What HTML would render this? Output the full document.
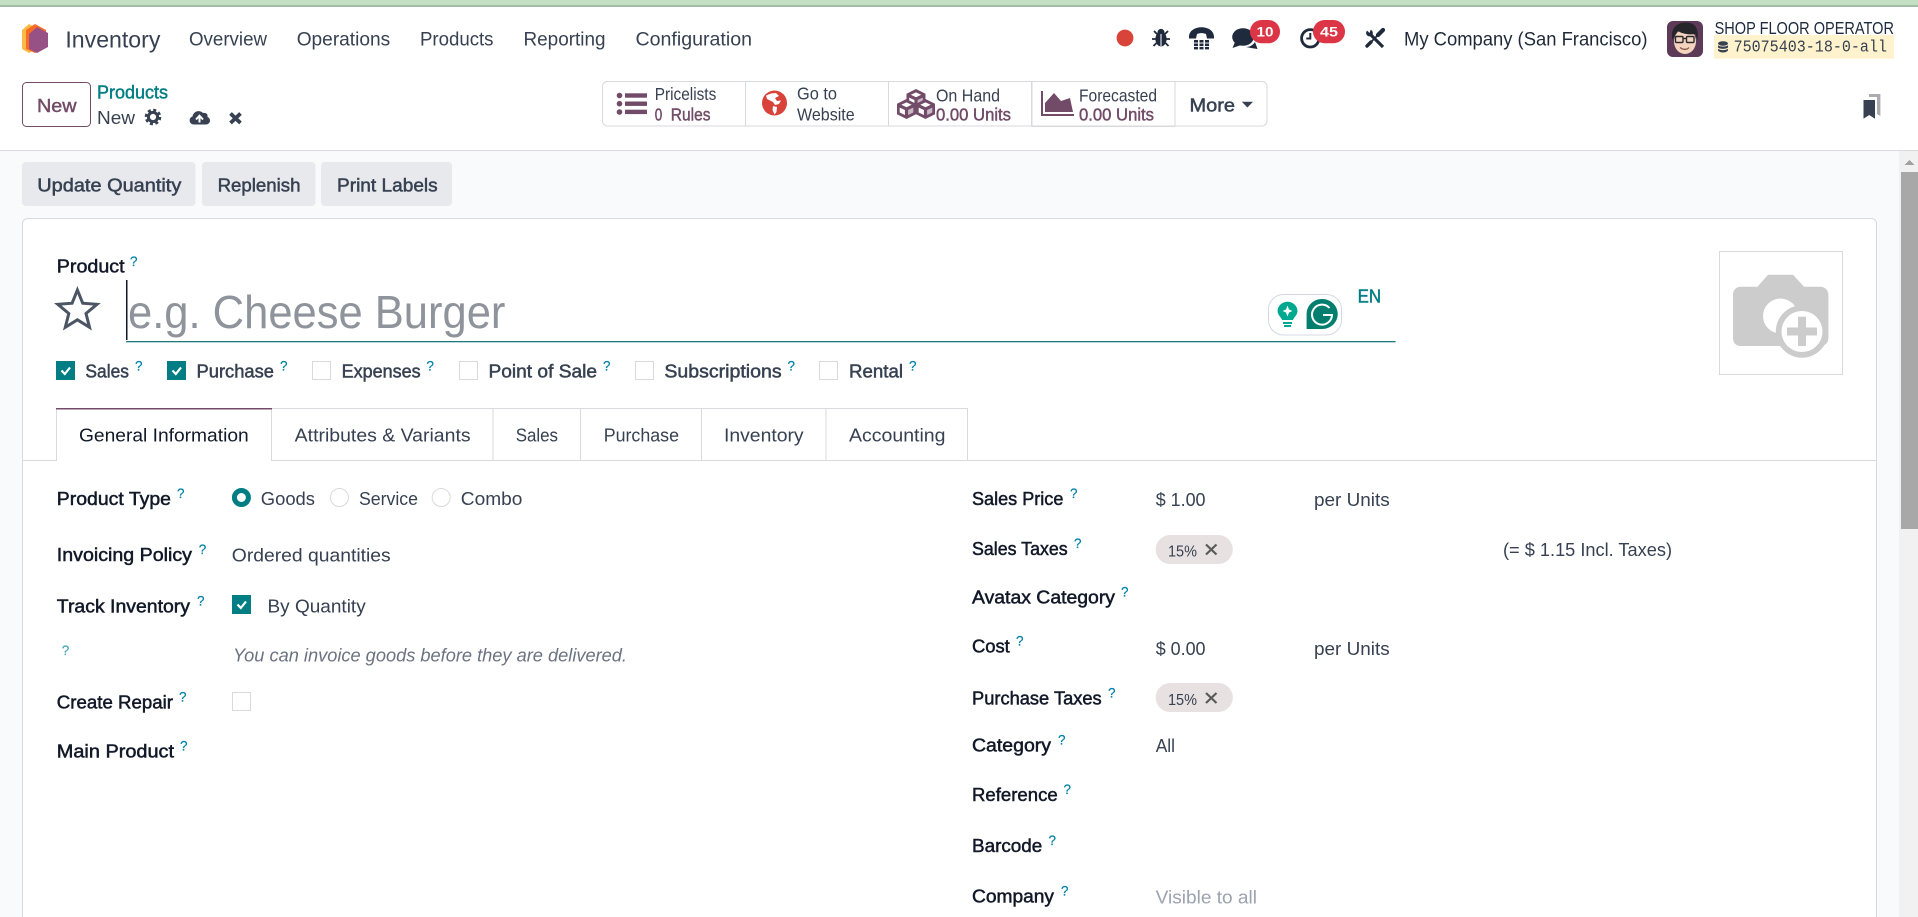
<!DOCTYPE html>
<html lang="en">
<head>
<meta charset="utf-8">
<title>Inventory - Products New</title>
<style>
html,body{margin:0;padding:0;width:1918px;height:917px;overflow:hidden;background:#f9fafb}
svg{display:block;position:absolute;left:0;top:0}
text{font-family:"Liberation Sans",sans-serif;font-size:18.8px;fill:#374151;white-space:pre}
.nav{fill:#374151;font-size:19.2px}
.dk{fill:#1f2937}
.lb{fill:#111827;stroke:#111827;stroke-width:.5px}
.sb{fill:#374151;stroke:#374151;stroke-width:.5px}
.pu{fill:#714b67;stroke:#714b67;stroke-width:.45px}
.te{fill:#017e84;stroke:#017e84;stroke-width:.45px}
.q{fill:#0180a5;font-size:13.5px;stroke:#0180a5;stroke-width:.2px}
.st{font-size:17.8px}
.ph{fill:#8f939b;font-size:46px}
.it{font-style:italic;fill:#6b7280}
.bd{fill:#fff;font-size:14px;font-weight:bold;font-family:"Liberation Sans",sans-serif}
.mu{fill:#9ca3af}
.mono{font-family:"Liberation Mono",monospace;font-size:17px;fill:#374151}
</style>
</head>
<body>
<svg width="1918" height="917" viewBox="0 0 1918 917" xmlns="http://www.w3.org/2000/svg">
<defs>
<g id="cube"><path d="M0-10 9.500-5.200V5.200L0 10-9.500 5.200V-5.200Z" fill="#714b67"/><path d="M0-6.600 5.200-4.200 0-1.800-5.200-4.200Z" fill="#fff"/><path d="M-6.800-1.400-1.600 1V6L-6.800 3.500Z" fill="#fff"/><path d="M6.800-1.400 1.600 1V6L6.800 3.500Z" fill="#c9b9c4"/></g>
</defs>
<!-- backgrounds -->
<rect width="1918" height="917" fill="#f9fafb"/>
<rect y="0" width="1918" height="5" fill="#c3dfc4"/>
<rect y="5" width="1918" height="2" fill="#a3bca4"/>
<rect y="7" width="1918" height="143" fill="#fff"/>
<rect y="150" width="1918" height="1" fill="#d8dadd"/>

<!-- logo -->
<path d="M29 24 40 30V47L29 53 22 49V30Z" fill="#fbb945"/>
<path d="M35 24 46 30V47L35 53 26 49V30Z" fill="#fc6b24"/>
<path d="M37 27 48 33V47L37 53 29 49V34Z" fill="#985184"/>

<!-- nav -->
<text x="65.400" y="47.500" textLength="95" lengthAdjust="spacingAndGlyphs" class="nav" style="font-size:23px">Inventory</text>
<text x="189" y="45.500" textLength="78" lengthAdjust="spacingAndGlyphs" class="nav">Overview</text>
<text x="296.700" y="45.500" textLength="93.500" lengthAdjust="spacingAndGlyphs" class="nav">Operations</text>
<text x="420" y="45.500" textLength="73.500" lengthAdjust="spacingAndGlyphs" class="nav">Products</text>
<text x="523.500" y="45.500" textLength="82" lengthAdjust="spacingAndGlyphs" class="nav">Reporting</text>
<text x="635.500" y="45.500" textLength="116.500" lengthAdjust="spacingAndGlyphs" class="nav">Configuration</text>

<!-- systray -->
<circle cx="1125" cy="38" r="8.400" fill="#d9443a"/>
<g fill="#1f2a3c">
<circle cx="1161" cy="32.500" r="3.600"/>
<ellipse cx="1161" cy="39" rx="5.600" ry="7.400"/>
<path d="M1154 31l3 3M1168 31l-3 3M1152 39h5M1170 39h-5M1153.500 46l3-3M1168.500 46l-3-3" stroke="#1f2a3c" stroke-width="1.800" fill="none"/>
<rect x="1160.500" y="34" width="1" height="12" fill="#fff"/>
</g>
<g fill="#1f2a3c">
<path d="M1189 37C1189 24 1214 24 1214 37L1214 38.500H1207L1206 34C1203 32.800 1200 32.800 1197 34L1196 38.500H1189Z"/>
<rect x="1194" y="40" width="4" height="2.600"/><rect x="1199.500" y="40" width="4" height="2.600"/><rect x="1205" y="40" width="4" height="2.600"/>
<rect x="1194" y="43.500" width="4" height="2.600"/><rect x="1199.500" y="43.500" width="4" height="2.600"/><rect x="1205" y="43.500" width="4" height="2.600"/>
<rect x="1194" y="47" width="4" height="2.400"/><rect x="1199.500" y="47" width="4" height="2.400"/><rect x="1205" y="47" width="4" height="2.400"/>
</g>
<ellipse cx="1243" cy="37" rx="10.800" ry="8.800" fill="#1f2a3c"/>
<path d="M1235 42 1232.500 48 1241 45Z" fill="#1f2a3c"/>
<path d="M1246 47C1250 47 1253 45 1255 42L1257.500 49 1251 48Z" fill="#1f2a3c"/>
<rect x="1250" y="20" width="30" height="23.300" rx="11.600" fill="#dc3545"/>
<text x="1256.500" y="36.500" textLength="17" lengthAdjust="spacingAndGlyphs" class="bd">10</text>
<circle cx="1310.300" cy="38.300" r="8.700" fill="none" stroke="#1f2a3c" stroke-width="2.800"/>
<path d="M1310.300 33v5.500h-4" fill="none" stroke="#1f2a3c" stroke-width="2"/>
<rect x="1313" y="20" width="32" height="23.300" rx="11.600" fill="#dc3545"/>
<text x="1320" y="36.500" textLength="18" lengthAdjust="spacingAndGlyphs" class="bd">45</text>
<g fill="none" stroke="#1f2a3c">
<path d="M1371 35 1383 47" stroke-width="3.200"/>
<circle cx="1369.500" cy="33" r="3.400" fill="#1f2a3c" stroke="none"/>
<path d="M1365.500 29 1369.500 33 1371 29Z" fill="#fff" stroke="none"/>
<path d="M1381 32 1368 45" stroke-width="1.800"/>
<path d="M1378 35 1383 30" stroke-width="4.200" stroke-linecap="round"/>
<path d="M1367 46 1371 42" stroke-width="3.400" stroke-linecap="round"/>
</g>
<text x="1404" y="45.500" textLength="243.500" lengthAdjust="spacingAndGlyphs" class="dk" style="font-size:19.200px">My Company (San Francisco)</text>

<!-- avatar -->
<rect x="1667" y="21" width="36" height="36" rx="6" fill="#5c3a58"/>
<ellipse cx="1685" cy="41.500" rx="11" ry="12.500" fill="#f4d4bf"/>
<path d="M1672.500 40C1670 28 1677 22.500 1686 22.500 1695 22.500 1699 28 1697.500 40L1695.500 34C1690 35 1682 34 1678 31 1676 33 1675 36 1672.500 40Z" fill="#26252a"/>
<g fill="none" stroke="#2b2a2e" stroke-width="1.400">
<rect x="1675.500" y="36.500" width="7.500" height="6" rx="1"/>
<rect x="1686.500" y="36.500" width="7.500" height="6" rx="1"/>
<path d="M1683 38.500h3.500"/>
<path d="M1680 47.500c3 2.500 7 2.500 9 0" stroke="#8a5a4a"/>
</g>

<!-- user -->
<rect x="1714" y="35" width="180" height="23.700" fill="#fff3cd"/>
<text x="1714.600" y="34" textLength="179.400" lengthAdjust="spacingAndGlyphs" class="dk" style="font-size:17.200px;fill:#1f2a3c">SHOP FLOOR OPERATOR</text>
<g fill="#374151">
<ellipse cx="1723" cy="43.500" rx="5" ry="2.300"/>
<path d="M1718 45.200c2 1.800 8 1.800 10 0v2.300c-2 1.800-8 1.800-10 0Z"/>
<path d="M1718 48.800c2 1.800 8 1.800 10 0v1.700c-2 2.700-8 2.700-10 0Z"/>
</g>
<text x="1733.600" y="51.700" textLength="153.400" lengthAdjust="spacingAndGlyphs" class="mono">75075403-18-0-all</text>

<!-- control panel left -->
<rect x="22.500" y="82.500" width="68" height="44" rx="4" fill="#fff" stroke="#714b67"/>
<text x="37" y="112" textLength="39.600" lengthAdjust="spacingAndGlyphs" class="pu">New</text>
<text x="97" y="98.500" textLength="71" lengthAdjust="spacingAndGlyphs" class="te">Products</text>
<text x="97" y="124" textLength="38" lengthAdjust="spacingAndGlyphs">New</text>
<circle cx="153" cy="117" r="4.600" fill="none" stroke="#374151" stroke-width="3"/>
<circle cx="153" cy="117" r="7" fill="none" stroke="#374151" stroke-width="2.600" stroke-dasharray="3 2.500"/>
<path d="M194 124.500C189 124.500 188 118 192.500 116.500 193 112 199 109 203 113 207 112.500 208 115 207.500 117 211.500 118.500 210.500 124.500 206 124.500Z" fill="#374151"/>
<path d="M199.500 122.500V116.500M196 119.500l3.500-3.800 3.500 3.800" fill="none" stroke="#fff" stroke-width="2"/>
<path d="M230.500 113.500 240.500 123M240.500 113.500 230.500 123" stroke="#374151" stroke-width="3.800" fill="none"/>

<!-- stat buttons -->
<rect x="602.500" y="81.500" width="664.500" height="44.500" rx="5" fill="#fff" stroke="#d8dadd"/>
<path d="M745.500 82V126M888.500 82V126M1031.500 82V126M1175 81.500V126.500" stroke="#d8dadd" fill="none"/>
<path d="M1175 81.500H1032V126.500H1175" stroke="#d8dadd" fill="none"/>
<g fill="#714b67">
<circle cx="619.500" cy="95.500" r="2.800"/><circle cx="619.500" cy="103.700" r="2.800"/><circle cx="619.500" cy="112" r="2.800"/>
<rect x="625" y="93.300" width="22" height="4.400"/><rect x="625" y="101.500" width="22" height="4.400"/><rect x="625" y="109.700" width="22" height="4.400"/>
</g>
<text x="654.700" y="100" textLength="61.600" lengthAdjust="spacingAndGlyphs" class="st">Pricelists</text>
<text x="654.700" y="120.700" textLength="7.500" lengthAdjust="spacingAndGlyphs" class="pu st">0</text>
<text x="670.800" y="120.700" textLength="39.700" lengthAdjust="spacingAndGlyphs" class="pu st">Rules</text>

<circle cx="774.500" cy="103" r="12.500" fill="#d8423a"/>
<path d="M766 95.500 771 93.500 776 93 779 96 775 98 777 101 781 100.500 779 104 775 105 773 102 769 100 767 99Z" fill="#fff"/>
<path d="M773 106 777 107 776.500 112 774.500 114.500 772.500 110Z" fill="#fff"/>
<text x="797" y="99.300" textLength="40" lengthAdjust="spacingAndGlyphs" class="st">Go to</text>
<text x="797" y="120.700" textLength="57.700" lengthAdjust="spacingAndGlyphs" class="st">Website</text>

<use href="#cube" x="916" y="99"/>
<use href="#cube" x="906.500" y="109"/>
<use href="#cube" x="925.500" y="109"/>
<text x="936" y="101.700" textLength="64" lengthAdjust="spacingAndGlyphs" class="st">On Hand</text>
<text x="936" y="120.700" textLength="75" lengthAdjust="spacingAndGlyphs" class="pu st">0.00 Units</text>

<path d="M1041 91h2V114H1074V116H1041Z" fill="#714b67"/>
<path d="M1045 112V103L1054 93 1061 101 1070 98 1073 112Z" fill="#714b67"/>
<text x="1079" y="101.700" textLength="78" lengthAdjust="spacingAndGlyphs" class="st">Forecasted</text>
<text x="1079" y="120.700" textLength="75" lengthAdjust="spacingAndGlyphs" class="pu st">0.00 Units</text>

<text x="1189.500" y="111.700" textLength="45.500" lengthAdjust="spacingAndGlyphs" class="sb">More</text>
<path d="M1241.800 101.700H1253L1247.400 107.500Z" fill="#374151"/>

<!-- bookmarks -->
<path d="M1869 94H1880.400V116L1877 114V97H1869Z" fill="#aaacb0"/>
<path d="M1863.500 100H1875V118.700L1869.200 115 1863.500 118.700Z" fill="#374151"/>

<!-- action buttons -->
<rect x="22" y="162" width="173.500" height="44" rx="4" fill="#e7e9ed"/>
<rect x="202" y="162" width="113.500" height="44" rx="4" fill="#e7e9ed"/>
<rect x="321" y="162" width="131" height="44" rx="4" fill="#e7e9ed"/>
<text x="37.300" y="191.500" textLength="144" lengthAdjust="spacingAndGlyphs" class="sb">Update Quantity</text>
<text x="217.600" y="191.500" textLength="82.900" lengthAdjust="spacingAndGlyphs" class="sb">Replenish</text>
<text x="337" y="191.500" textLength="100.700" lengthAdjust="spacingAndGlyphs" class="sb">Print Labels</text>

<!-- card: open at the bottom, it continues below the visible frame -->
<path d="M22.500 917V223.500A5 5 0 0 1 27.500 218.500H1871.500A5 5 0 0 1 1876.500 223.500V917" fill="#fff" stroke="#d8dadd"/>

<!-- title -->
<text x="56.800" y="272.700" textLength="67.800" lengthAdjust="spacingAndGlyphs" class="lb">Product</text>
<text x="130" y="266" class="q">?</text>
<path d="M77.400 290 82.700 303.200 97 304.300 86 313.500 89.500 327.300 77.400 319.800 65.300 327.300 68.800 313.500 57.800 304.300 72.100 303.200Z" fill="none" stroke="#4b5563" stroke-width="3"/>
<rect x="126" y="341" width="1269.600" height="1.300" fill="#1f7a7c"/>
<text x="128" y="328" textLength="377.400" lengthAdjust="spacingAndGlyphs" class="ph">e.g. Cheese Burger</text>
<rect x="126" y="280" width="1.500" height="60" fill="#111827"/>

<!-- grammarly -->
<rect x="1268.500" y="294.500" width="73" height="40.500" rx="15" fill="#fff" stroke="#d5d8e4"/>
<path d="M1287.500 301.700C1293 301.700 1297.500 306 1297.500 311 1297.500 315 1294 317 1293 320H1282C1281 317 1277.600 315 1277.600 311 1277.600 306 1282 301.700 1287.500 301.700Z" fill="#00a88f"/>
<path d="M1287.500 305.500 1289 309.500 1292.500 311 1289 312.500 1287.500 316.500 1286 312.500 1282.500 311 1286 309.500Z" fill="#fff"/>
<rect x="1283" y="322" width="9" height="2" fill="#00a88f"/>
<rect x="1284" y="325" width="7" height="2" fill="#00a88f"/>
<path d="M1306.600 329V314C1306.600 305.500 1313.500 299 1322 299 1330.600 299 1337.700 305.500 1337.700 314 1337.700 322.500 1330.600 329 1322 329Z" fill="#027e6f"/>
<path d="M1329.500 308A10 10 0 1 0 1332 315H1323" fill="none" stroke="#fff" stroke-width="2"/>
<text x="1357.600" y="302.700" textLength="23.400" lengthAdjust="spacingAndGlyphs" class="te">EN</text>

<!-- image placeholder -->
<rect x="1719.500" y="251.500" width="123" height="123" fill="#fff" stroke="#d8dadd"/>
<path d="M1741 286.700H1757.500L1768 274.700H1793L1804 286.700H1820C1825 286.700 1828.400 290 1828.400 295V338C1828.400 343 1825 346 1820 346H1741C1736 346 1733 343 1733 338V295C1733 290 1736 286.700 1741 286.700Z" fill="#ccc"/>
<circle cx="1780.500" cy="316" r="17.500" fill="#fff"/>
<circle cx="1802" cy="331.500" r="26.200" fill="#ccc"/>
<circle cx="1802" cy="331.500" r="20.500" fill="#fff"/>
<rect x="1787" y="327.500" width="30" height="8" fill="#ccc"/>
<rect x="1798" y="316.700" width="8" height="29.300" fill="#ccc"/>

<!-- check row -->
<rect x="56" y="361" width="19" height="19" fill="#017e84"/>
<path d="M61.500 370.500 64.800 374 70 367.500" fill="none" stroke="#fff" stroke-width="2.200"/>
<text x="85.400" y="377.300" textLength="43.600" lengthAdjust="spacingAndGlyphs" class="sb">Sales</text>
<text x="135" y="370.300" class="q">?</text>
<rect x="167" y="361" width="19" height="19" fill="#017e84"/>
<path d="M172.500 370.500 175.800 374 181 367.500" fill="none" stroke="#fff" stroke-width="2.200"/>
<text x="196.500" y="377.300" textLength="77.500" lengthAdjust="spacingAndGlyphs" class="sb">Purchase</text>
<text x="280" y="370.300" class="q">?</text>
<rect x="312.500" y="361.500" width="18" height="18" fill="#fff" stroke="#d8dadd"/>
<text x="341.600" y="377.300" textLength="79" lengthAdjust="spacingAndGlyphs" class="sb">Expenses</text>
<text x="426.400" y="370.300" class="q">?</text>
<rect x="459.500" y="361.500" width="18" height="18" fill="#fff" stroke="#d8dadd"/>
<text x="488.500" y="377.300" textLength="108.500" lengthAdjust="spacingAndGlyphs" class="sb">Point of Sale</text>
<text x="603" y="370.300" class="q">?</text>
<rect x="635.500" y="361.500" width="18" height="18" fill="#fff" stroke="#d8dadd"/>
<text x="664.400" y="377.300" textLength="117.200" lengthAdjust="spacingAndGlyphs" class="sb">Subscriptions</text>
<text x="787.500" y="370.300" class="q">?</text>
<rect x="819.500" y="361.500" width="18" height="18" fill="#fff" stroke="#d8dadd"/>
<text x="849" y="377.300" textLength="54" lengthAdjust="spacingAndGlyphs" class="sb">Rental</text>
<text x="909" y="370.300" class="q">?</text>

<!-- tabs -->
<path d="M23 460.500H56.500V408.500H271.500V460.500H1876" fill="none" stroke="#d8dadd"/>
<path d="M271.500 408.500H967.500V460.500M493 408.500V460.500M580.500 408.500V460.500M701.500 408.500V460.500M826 408.500V460.500" fill="none" stroke="#d8dadd"/>
<rect x="56" y="408" width="216" height="1.500" fill="#714b67"/>
<rect x="57" y="459" width="214" height="3" fill="#fff"/>
<text x="79" y="441.700" textLength="169.700" lengthAdjust="spacingAndGlyphs" class="dk" style="fill:#111827">General Information</text>
<text x="294.700" y="441.700" textLength="175.900" lengthAdjust="spacingAndGlyphs">Attributes &amp; Variants</text>
<text x="515.700" y="441.700" textLength="42.300" lengthAdjust="spacingAndGlyphs">Sales</text>
<text x="603.700" y="441.700" textLength="75.300" lengthAdjust="spacingAndGlyphs">Purchase</text>
<text x="724" y="441.700" textLength="79.600" lengthAdjust="spacingAndGlyphs">Inventory</text>
<text x="849" y="441.700" textLength="96.500" lengthAdjust="spacingAndGlyphs">Accounting</text>

<!-- left column -->
<text x="56.800" y="505" textLength="114.200" lengthAdjust="spacingAndGlyphs" class="lb">Product Type</text>
<text x="177" y="498" class="q">?</text>
<circle cx="241.400" cy="497.500" r="7" fill="#fff" stroke="#017e84" stroke-width="5"/>
<text x="260.800" y="505" textLength="54.200" lengthAdjust="spacingAndGlyphs">Goods</text>
<circle cx="339.400" cy="497.500" r="9" fill="#fff" stroke="#d8dadd"/>
<text x="359" y="505" textLength="59" lengthAdjust="spacingAndGlyphs">Service</text>
<circle cx="441.200" cy="497.500" r="9" fill="#fff" stroke="#d8dadd"/>
<text x="460.800" y="505" textLength="61.600" lengthAdjust="spacingAndGlyphs">Combo</text>

<text x="56.800" y="561" textLength="135.200" lengthAdjust="spacingAndGlyphs" class="lb">Invoicing Policy</text>
<text x="198.800" y="554" class="q">?</text>
<text x="231.800" y="561.700" textLength="158.900" lengthAdjust="spacingAndGlyphs">Ordered quantities</text>

<text x="56.800" y="612.300" textLength="133.200" lengthAdjust="spacingAndGlyphs" class="lb">Track Inventory</text>
<text x="197" y="605.300" class="q">?</text>
<rect x="232" y="595" width="19" height="19" fill="#017e84"/>
<path d="M237.500 604.500 240.800 608 246 601.500" fill="none" stroke="#fff" stroke-width="2.200"/>
<text x="267.500" y="612.700" textLength="98.200" lengthAdjust="spacingAndGlyphs">By Quantity</text>

<text x="61.700" y="655" class="q" style="fill:#4ba3bd;stroke:#4ba3bd">?</text>
<text x="233" y="661.700" textLength="394" lengthAdjust="spacingAndGlyphs" class="it">You can invoice goods before they are delivered.</text>

<text x="56.800" y="708.300" textLength="116.200" lengthAdjust="spacingAndGlyphs" class="lb">Create Repair</text>
<text x="179" y="701.300" class="q">?</text>
<rect x="232.500" y="692.500" width="18" height="18" fill="#fff" stroke="#d8dadd"/>

<text x="56.800" y="757.700" textLength="117.200" lengthAdjust="spacingAndGlyphs" class="lb">Main Product</text>
<text x="180" y="750.700" class="q">?</text>

<!-- right column -->
<text x="972" y="505" textLength="91.400" lengthAdjust="spacingAndGlyphs" class="lb">Sales Price</text>
<text x="1070" y="498" class="q">?</text>
<text x="1155.700" y="506" textLength="49.800" lengthAdjust="spacingAndGlyphs">$ 1.00</text>
<text x="1314" y="506" textLength="75.700" lengthAdjust="spacingAndGlyphs">per Units</text>

<text x="972" y="555" textLength="95.700" lengthAdjust="spacingAndGlyphs" class="lb">Sales Taxes</text>
<text x="1074" y="548" class="q">?</text>
<rect x="1155.700" y="535" width="77.100" height="29" rx="14.500" fill="#e7e1e1"/>
<text x="1168" y="556.300" textLength="29" lengthAdjust="spacingAndGlyphs" style="font-size:15.500px">15%</text>
<path d="M1206 544.500 1216.500 554.500M1216.500 544.500 1206 554.500" stroke="#5a5a5a" stroke-width="2.200" fill="none"/>
<text x="1503" y="556" textLength="169" lengthAdjust="spacingAndGlyphs">(= $ 1.15 Incl. Taxes)</text>

<text x="972" y="603.300" textLength="143" lengthAdjust="spacingAndGlyphs" class="lb">Avatax Category</text>
<text x="1121" y="596.300" class="q">?</text>

<text x="972" y="652.700" textLength="37.800" lengthAdjust="spacingAndGlyphs" class="lb">Cost</text>
<text x="1016" y="645.700" class="q">?</text>
<text x="1155.700" y="655" textLength="49.800" lengthAdjust="spacingAndGlyphs">$ 0.00</text>
<text x="1314" y="655" textLength="75.700" lengthAdjust="spacingAndGlyphs">per Units</text>

<text x="972" y="704.300" textLength="129.700" lengthAdjust="spacingAndGlyphs" class="lb">Purchase Taxes</text>
<text x="1108" y="697.300" class="q">?</text>
<rect x="1155.700" y="683" width="77.100" height="29" rx="14.500" fill="#e7e1e1"/>
<text x="1168" y="705" textLength="29" lengthAdjust="spacingAndGlyphs" style="font-size:15.500px">15%</text>
<path d="M1206 693 1216.500 703M1216.500 693 1206 703" stroke="#5a5a5a" stroke-width="2.200" fill="none"/>

<text x="972" y="751.700" textLength="79" lengthAdjust="spacingAndGlyphs" class="lb">Category</text>
<text x="1058" y="744.700" class="q">?</text>
<text x="1155.700" y="752" textLength="19.300" lengthAdjust="spacingAndGlyphs">All</text>

<text x="972" y="801" textLength="85.700" lengthAdjust="spacingAndGlyphs" class="lb">Reference</text>
<text x="1063.500" y="794" class="q">?</text>

<text x="972" y="852" textLength="70.300" lengthAdjust="spacingAndGlyphs" class="lb">Barcode</text>
<text x="1048.500" y="845" class="q">?</text>

<text x="972" y="902.300" textLength="82" lengthAdjust="spacingAndGlyphs" class="lb">Company</text>
<text x="1061" y="895.300" class="q">?</text>
<text x="1155.700" y="903.300" textLength="101.300" lengthAdjust="spacingAndGlyphs" class="mu">Visible to all</text>

<!-- scrollbar -->
<rect x="1899" y="151" width="19" height="766" fill="#f1f1f1"/>
<rect x="1901" y="172" width="17" height="357" fill="#a8a8a8"/>
<path d="M1909.500 160 1914.500 165H1904.500Z" fill="#a0a0a0"/>
</svg>
</body>
</html>
